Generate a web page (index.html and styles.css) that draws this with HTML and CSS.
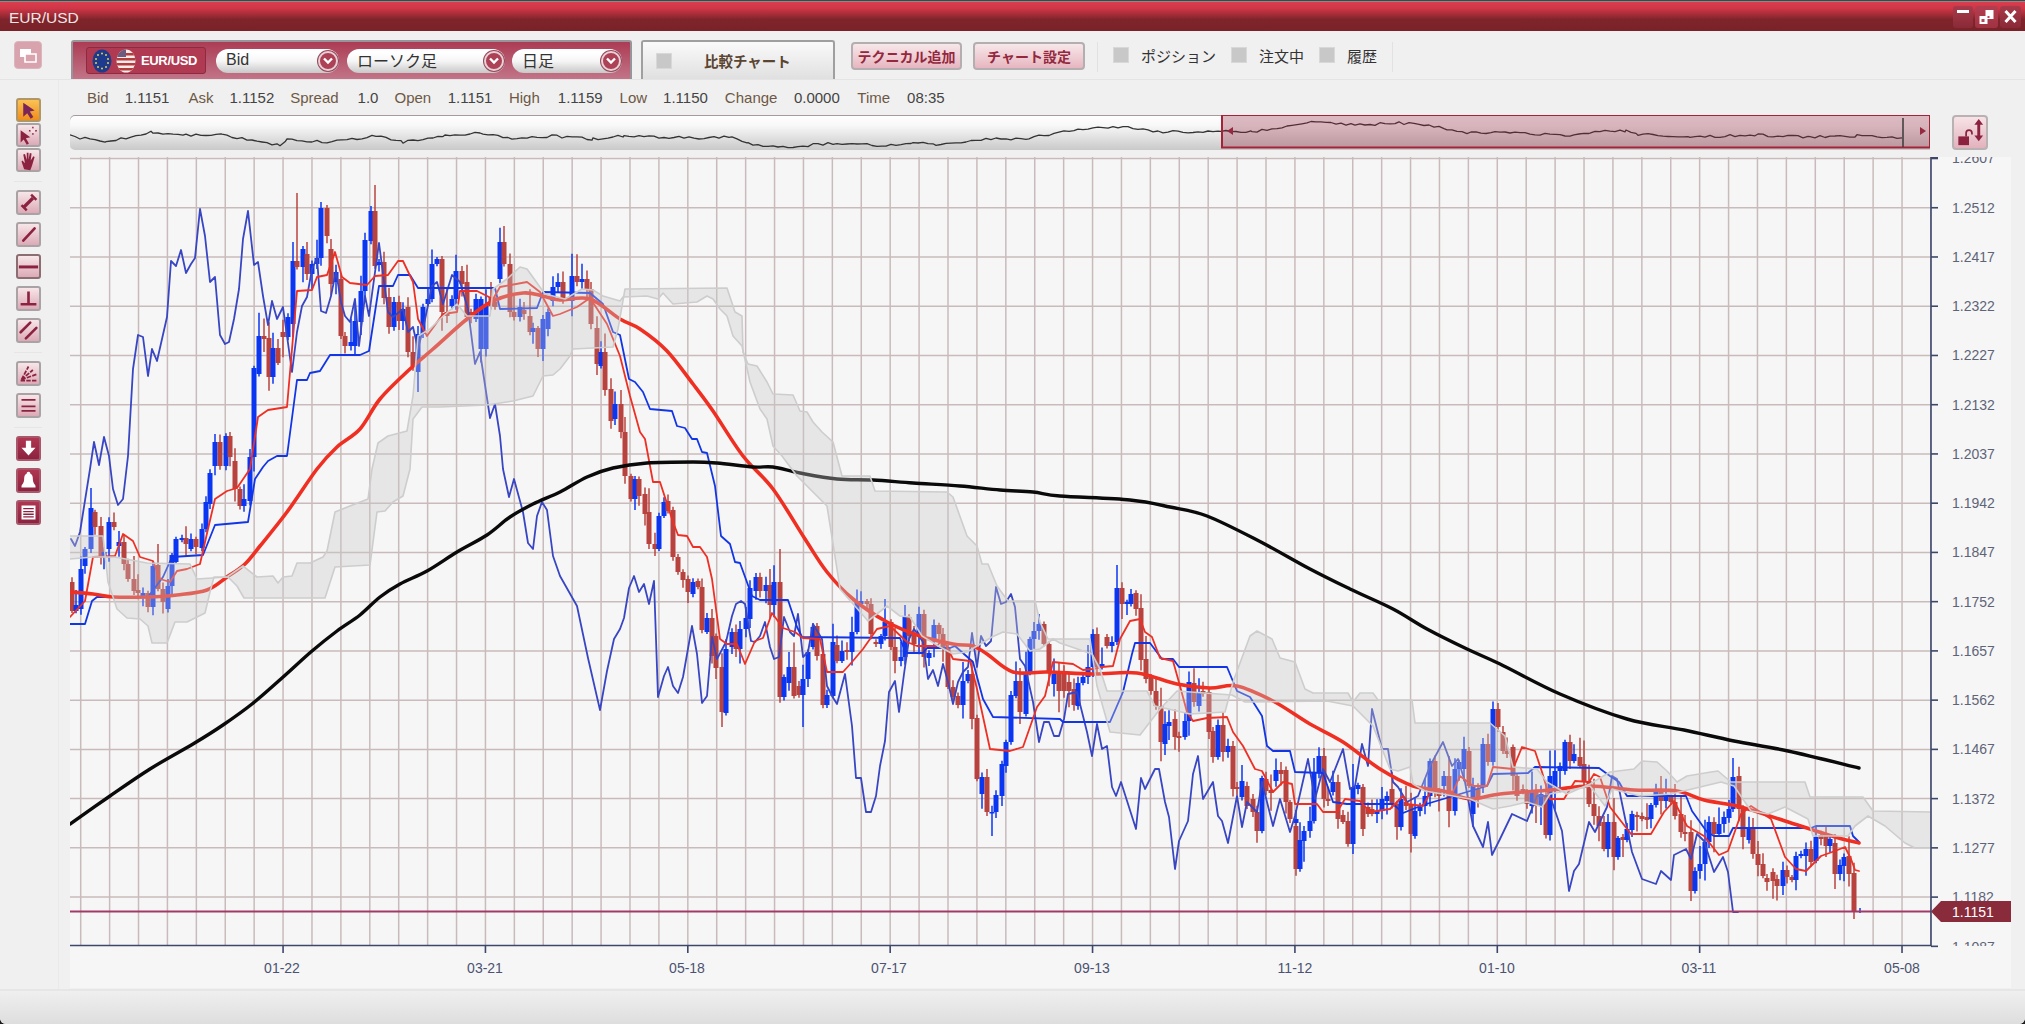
FILE: index.html
```html
<!DOCTYPE html>
<html lang="ja">
<head>
<meta charset="utf-8">
<title>EUR/USD</title>
<link rel="stylesheet" href="styles.css">
</head>
<body>
<div class="window">
  <header class="titlebar">
    <span class="title">EUR/USD</span>
    <div class="winbtns">
      <span class="winbtn"><svg viewBox="0 0 20 22" width="20" height="22"><rect x="4" y="4" width="12" height="3" fill="#fff"/></svg></span>
      <span class="winbtn winbtn-on"><svg viewBox="0 0 22 22" width="23" height="22"><path d="M10 4h8v9h-8zM4 10h8v8H4z" fill="#fff"/><path d="M12 10h2v2h-2zM6 13h3v3H6z" fill="#b8465a"/></svg></span>
      <span class="winbtn"><svg viewBox="0 0 20 22" width="21" height="22"><path d="M5 5l10 11M15 5L5 16" stroke="#fff" stroke-width="3"/></svg></span>
    </div>
  </header>

  <section class="toolbar">
    <span class="toggle"><svg viewBox="0 0 28 28" width="28" height="28"><path d="M6 8h11v8H6z" fill="#fff"/><path d="M11 13h11v8H11z" fill="#d9a3ae" stroke="#fff" stroke-width="1.6"/></svg></span>
    <div class="panel">
      <div class="pair">
        <svg class="flag" viewBox="0 0 20 24" width="20" height="24"><ellipse cx="10" cy="12" rx="9.5" ry="11.5" fill="#1d3a8f"/><g fill="#e8d040"><circle cx="10" cy="4.5" r="1"/><circle cx="14" cy="6" r="1"/><circle cx="16" cy="10" r="1"/><circle cx="16" cy="14" r="1"/><circle cx="14" cy="18" r="1"/><circle cx="10" cy="19.5" r="1"/><circle cx="6" cy="18" r="1"/><circle cx="4" cy="14" r="1"/><circle cx="4" cy="10" r="1"/><circle cx="6" cy="6" r="1"/></g></svg>
        <svg class="flag" viewBox="0 0 20 24" width="20" height="24"><defs><clipPath id="usclip"><ellipse cx="10" cy="12" rx="9.5" ry="11.5"/></clipPath></defs><g clip-path="url(#usclip)"><rect width="20" height="24" fill="#f4ecea"/><path d="M0 4h20v2.4H0zM0 9h20v2.4H0zM0 14h20v2.4H0zM0 19h20v2.4H0z" fill="#b53c3c"/><rect width="10" height="8" fill="#6d5a7c"/></g></svg>
        <span class="pair-name">EUR/USD</span>
      </div>
      <div class="select select-bid"><span>Bid</span><i class="chev"><svg viewBox="0 0 12 10" width="12" height="10"><path d="M2 2.5l4 4 4-4" fill="none" stroke="#fff" stroke-width="2.4"/></svg></i></div>
      <div class="select select-type"><span>ローソク足</span><i class="chev"><svg viewBox="0 0 12 10" width="12" height="10"><path d="M2 2.5l4 4 4-4" fill="none" stroke="#fff" stroke-width="2.4"/></svg></i></div>
      <div class="select select-span"><span>日足</span><i class="chev"><svg viewBox="0 0 12 10" width="12" height="10"><path d="M2 2.5l4 4 4-4" fill="none" stroke="#fff" stroke-width="2.4"/></svg></i></div>
    </div>
    <div class="compare"><i class="check"></i><span>比較チャート</span></div>
    <button class="pink-btn pink-btn-a">テクニカル追加</button>
    <button class="pink-btn pink-btn-b">チャート設定</button>
    <div class="checks">
      <i class="check"></i><span class="check-label">ポジション</span>
      <i class="check"></i><span class="check-label">注文中</span>
      <i class="check"></i><span class="check-label">履歴</span>
    </div>
  </section>

  <div class="workspace">
    <aside class="sidebar">
      <div class="tools tools-tight">
        <span class="tool tool-active"><svg viewBox="0 0 24 24"><path d="M6 3l13 9-5.5 1 4 6.5-3 2-4-6.5L6 19z" fill="#7a2458"/></svg></span>
        <span class="tool"><svg viewBox="0 0 24 24"><path d="M3 6l11 8-5 1 3.500 6-2.500 1.600-3.500-6L3 20z" fill="#8b2340"/><path d="M17 2v9M12.500 6.500h9" stroke="#8b2340" stroke-width="1.600"/><circle cx="17" cy="6.500" r="2.800" fill="#f3dfe3"/></svg></span>
        <span class="tool"><svg viewBox="0 0 24 24"><path d="M7 22l-3-9 1-1 3 3-2-10 2-.5 2 7V3h2v8l1.500-7.500 2 .5-1 8 3-5 1.500 1-3 10-2 5z" fill="#8b2340"/></svg></span>
      </div>
      <hr class="tool-sep">
      <div class="tools">
        <span class="tool"><svg viewBox="0 0 24 24"><path d="M7 17L17 7" stroke="#8b2340" stroke-width="4"/><path d="M3 16l6 6 2-2-6-6zM14 4l6 6 2-2-6-6z" fill="#8b2340"/></svg></span>
        <span class="tool"><svg viewBox="0 0 24 24"><path d="M6 19L19 5" stroke="#8b2340" stroke-width="3" stroke-linecap="round"/></svg></span>
        <span class="tool tool-dark-edge"><svg viewBox="0 0 24 24"><path d="M1 12.500h22" stroke="#8b2340" stroke-width="3.400"/></svg></span>
        <span class="tool"><svg viewBox="0 0 24 24"><path d="M12 4v14M3 18.500h18" stroke="#8b2340" stroke-width="3"/></svg></span>
        <span class="tool"><svg viewBox="0 0 24 24"><path d="M3 14L14 3M9 21L21 9" stroke="#8b2340" stroke-width="3" stroke-linecap="round"/></svg></span>
      </div>
      <hr class="tool-sep">
      <div class="tools">
        <span class="tool"><svg viewBox="0 0 24 24"><path d="M4 19L12 4M4 19L17 8M4 19L21 13M3 20h18" stroke="#8b2340" stroke-width="2" stroke-dasharray="5 1.500" fill="none"/></svg></span>
        <span class="tool"><svg viewBox="0 0 24 24"><path d="M4 5.500h16M4 13h16M4 18h16" stroke="#8b2340" stroke-width="2"/></svg></span>
      </div>
      <hr class="tool-sep">
      <div class="tools">
        <span class="tool tool-solid"><svg viewBox="0 0 24 24"><path d="M9 3h6v8h5l-8 9-8-9h5z" fill="#fff"/></svg></span>
        <span class="tool tool-solid"><svg viewBox="0 0 24 24"><path d="M12 2c1.500 0 2 1 2 2 2.500 1 3 3.500 3 7 0 3 2 5 3 7v2H4v-2c1-2 3-4 3-7 0-3.500.5-6 3-7 0-1 .5-2 2-2z" fill="#fff"/></svg></span>
        <span class="tool tool-solid"><svg viewBox="0 0 24 24"><path d="M4 4h16v16H4z" fill="#fff"/><path d="M6 7.500h12M6 11h12M6 14h12M6 17h12" stroke="#8b2340" stroke-width="1.500"/></svg></span>
      </div>
    </aside>

    <main class="content">
      <div class="info">
        <span class="k k-bid">Bid</span><span class="v v-bid">1.1151</span>
        <span class="k k-ask">Ask</span><span class="v v-ask">1.1152</span>
        <span class="k k-spread">Spread</span><span class="v v-spread">1.0</span>
        <span class="k k-open">Open</span><span class="v v-open">1.1151</span>
        <span class="k k-high">High</span><span class="v v-high">1.1159</span>
        <span class="k k-low">Low</span><span class="v v-low">1.1150</span>
        <span class="k k-change">Change</span><span class="v v-change">0.0000</span>
        <span class="k k-time">Time</span><span class="v v-time">08:35</span>
      </div>

      <div class="navrow">
        <div class="navigator">
          <svg id="navsvg" class="navsvg" viewBox="71 115 1860 35" width="1860" height="35"></svg>
        </div>
        <span class="lock"><svg viewBox="0 0 36 36" width="36" height="35"><path d="M27 4l-4.500 6h3v11h-3L27 27l4.500-6h-3V10h3z" fill="#8b2340"/><path d="M6 22h11v9H6z" fill="#8b2340"/><path d="M14 22v-3.500a3 3 0 0 1 6 0V20" fill="none" stroke="#8b2340" stroke-width="1.800"/></svg></span>
      </div>

      <div class="chart">
        <svg id="chartsvg" class="chartsvg" viewBox="70 158 1941 831" width="1941" height="831">
          <defs>
            <clipPath id="plotclip"><rect x="70" y="158" width="1861" height="789"/></clipPath>
            <clipPath id="axisclip"><rect x="1931" y="158" width="80" height="789"/></clipPath>
          </defs>
          <g id="plot" clip-path="url(#plotclip)"></g>
          <g id="axes"></g>
          <g class="price-labels" clip-path="url(#axisclip)">
            <text x="1952" y="164">1.2607</text>
            <text x="1952" y="214">1.2512</text>
            <text x="1952" y="263">1.2417</text>
            <text x="1952" y="312">1.2322</text>
            <text x="1952" y="361">1.2227</text>
            <text x="1952" y="411">1.2132</text>
            <text x="1952" y="460">1.2037</text>
            <text x="1952" y="509">1.1942</text>
            <text x="1952" y="558">1.1847</text>
            <text x="1952" y="608">1.1752</text>
            <text x="1952" y="657">1.1657</text>
            <text x="1952" y="706">1.1562</text>
            <text x="1952" y="755">1.1467</text>
            <text x="1952" y="805">1.1372</text>
            <text x="1952" y="854">1.1277</text>
            <text x="1952" y="903">1.1182</text>
            <text x="1952" y="953">1.1087</text>
          </g>
          <polygon class="price-tag" points="1931,912.500 1941,902 2011,902 2011,923 1941,923"/>
          <text class="price-tag-text" x="1952" y="918">1.1151</text>
          <g class="date-labels">
            <text x="282" y="974">01-22</text>
            <text x="485" y="974">03-21</text>
            <text x="687" y="974">05-18</text>
            <text x="889" y="974">07-17</text>
            <text x="1092" y="974">09-13</text>
            <text x="1295" y="974">11-12</text>
            <text x="1497" y="974">01-10</text>
            <text x="1699" y="974">03-11</text>
            <text x="1902" y="974">05-08</text>
          </g>
        </svg>
      </div>
    </main>
  </div>
  <footer class="footer"></footer>
</div>
<script src="chart.js"></script>
</body>
</html>
```

FILE: styles.css
```css
* { box-sizing: border-box; }
html, body { margin: 0; height: 100%; background: #1c1c1c; overflow: hidden; }
body { font-family: "Liberation Sans", "Noto Sans CJK JP", sans-serif; }

.window {
  width: 2025px; height: 1024px;
  display: flex; flex-direction: column;
  background: #f0f0f0;
  border-radius: 0 0 6px 6px;
  overflow: hidden;
}

.titlebar {
  height: 31px; flex: none;
  display: flex; align-items: center;
  padding: 3px 4px 0 9px;
  border-top: 1px solid #444;
  background: linear-gradient(#dc3e50 0, #cf3646 25%, #7f242b 62%, #7a2229 100%);
  box-shadow: inset 0 1px 0 #8a8a8a;
}
.title { color: #f2e6e6; font-size: 15.5px; }
.winbtns { margin-left: auto; display: flex; gap: 2px; align-self: flex-start; margin-top: 2px; }
.winbtn {
  display: flex; height: 22px; border-radius: 3px;
  background: linear-gradient(#a83a4a, #8a2a36);
}
.winbtn-on { background: linear-gradient(#b33e50, #a03242); }

.toolbar {
  height: 49px; flex: none;
  display: flex; align-items: flex-start;
  border-bottom: 1px solid #e4e4e4;
  padding: 9px 0 0 14px;
}
.toggle {
  width: 28px; height: 28px; margin-top: 1px; display: block;
  background: #d9a3ae; border-radius: 4px; border: 1px solid #dcb6be;
}
.toggle svg { display: block; margin: -1px; }

.panel {
  width: 561px; height: 39px; margin-left: 29px; flex: none;
  display: flex; align-items: flex-start;
  padding: 5px 0 0 13px;
  background: linear-gradient(#ab3c54, #c27488);
  border: 2px solid #99939a; border-bottom: 0;
  border-radius: 3px 3px 0 0;
}
.pair {
  width: 120px; height: 27px; flex: none;
  display: flex; align-items: center; gap: 4px;
  padding-left: 5px; border-radius: 3px;
  background: #b03a52; border: 1px solid #8b2a40;
}
.flag { flex: none; }
.pair-name { color: #fff; font-size: 13px; font-weight: 700; letter-spacing: -0.35px; margin-left: 1px; }

.select {
  height: 24px; flex: none; margin-top: 2px;
  display: flex; align-items: center; justify-content: space-between;
  padding: 0 1px 2px 10px; font-size: 16px; color: #333;
  border-radius: 12px;
  background: linear-gradient(#fff 15%, #f6f6f6 50%, #c8c8c8 100%);
}
.select-bid { width: 123px; margin-left: 10px; }
.select-type { width: 158px; margin-left: 8px; }
.select-span { width: 110px; margin-left: 7px; padding-left: 10px; }
.chev {
  width: 20px; height: 20px; border-radius: 50%; margin-top: 2px;
  display: flex; align-items: center; justify-content: center;
  background: #ad4257; border: 2px solid #e8d0d6;
  box-shadow: 0 0 0 1px #96485a;
}

.compare {
  width: 194px; height: 39px; margin-left: 9px; flex: none;
  display: flex; align-items: center;
  padding-left: 13px;
  border: 2px solid #9f9f9f; border-bottom: 0;
  border-radius: 3px 3px 0 0;
  background: linear-gradient(#fafafa, #e0e0e0);
}
.compare span { font-size: 14.5px; font-weight: 700; color: #5a4432; margin-left: 32px; }
.check {
  width: 16px; height: 16px; flex: none; display: block;
  background: #c8c8c8; border: 1px solid #d8d8d8;
}

.pink-btn {
  height: 28px; flex: none; padding: 0; margin-top: 2px;
  font: 700 14px "Liberation Sans", "Noto Sans CJK JP", sans-serif;
  color: #93283f; border: 2px solid #b5aeb0; border-radius: 4px;
  background: linear-gradient(#f7e8ea, #e7b6c0);
}
.pink-btn-a { width: 111px; margin-left: 16px; }
.pink-btn-b { width: 112px; margin-left: 11px; }

.checks {
  display: flex; align-items: center; height: 30px; flex: none;
  margin: 2px 0 0 12px; padding: 0 17px 4px 15px;
  width: 296px;
  border-left: 1px solid #e2e2e2; border-right: 1px solid #e2e2e2;
}
.check-label { font-size: 15px; color: #333; margin: 0 15px 0 12px; white-space: nowrap; }

.workspace { flex: 1; display: flex; min-height: 0; }
.sidebar {
  width: 59px; flex: none; margin-right: 11px;
  display: flex; flex-direction: column;
  padding: 18px 0 0 16px;
  border-right: 1px solid #e9e9e9;
}
.tools { display: flex; flex-direction: column; gap: 7px; }
.tools-tight { gap: 1px; }
.tool {
  display: block; width: 25px; height: 25px;
  border: 2px solid #aaa3a5; border-radius: 3px;
  background: linear-gradient(#f7e6e9, #dcaab6);
}
.tool svg { display: block; width: 21px; height: 21px; }
.tools-tight .tool { height: 24px; }
.tool-active { background: linear-gradient(#fbc255, #ef8d1c); border-color: #b19666; }
.tool-dark-edge { border-color: #8a6e72; }
.tool-solid { background: linear-gradient(#b03650, #8b2340); border-color: #a8566a; }
.tool-sep { width: 28px; margin: 9px 0 8px -2px; border: 0; border-top: 1px solid #e6e6e6; height: 0; }

.content { flex: 1; min-width: 0; display: flex; flex-direction: column; }
.info {
  height: 34px; flex: none;
  display: flex; align-items: center;
  font-size: 15px; color: #444;
}
.k { color: #6e5845; }
.k-bid { margin-left: 17px; }
.v-bid { margin-left: 16px; }
.k-ask { margin-left: 19px; }
.v-ask { margin-left: 16px; }
.k-spread { margin-left: 16px; }
.v-spread { margin-left: 19px; }
.k-open { margin-left: 16px; }
.v-open { margin-left: 16.5px; }
.k-high { margin-left: 16.5px; }
.v-high { margin-left: 18px; }
.k-low { margin-left: 17px; }
.v-low { margin-left: 16px; }
.k-change { margin-left: 17px; }
.v-change { margin-left: 16.5px; }
.k-time { margin-left: 17.5px; }
.v-time { margin-left: 17px; }

.navrow { height: 43px; flex: none; display: flex; align-items: flex-start; padding-top: 1px; }
.navigator {
  width: 1860px; height: 35px; flex: none; overflow: hidden;
  border-radius: 5px 0 0 5px;
  background: linear-gradient(#fff 0, #f8f8f8 30%, #c9c9c9 100%);
  box-shadow: inset 0 1px 0 #a89a9a;
}
.navsvg { display: block; }
.lock {
  width: 36px; height: 35px; margin-left: 22px; flex: none; display: block;
  border: 2px solid #b8b2b3; border-radius: 4px;
  background: linear-gradient(#f7e3e7, #e2b2bd);
}
.lock svg { display: block; margin: -2px; }

.chart { height: 831px; flex: none; }
.chartsvg { display: block; }
.chart-bg { fill: #f6f6f6; }
.grid-line { stroke: #c9bbbb; stroke-width: 1.5; }
.axis-line { stroke: #3c476b; stroke-width: 1.6; fill: none; }
.price-labels text { font: 14px "Liberation Sans", sans-serif; fill: #5e6478; }
.date-labels text { font: 14px "Liberation Sans", sans-serif; fill: #4b5272; text-anchor: middle; }
.price-tag { fill: #8a2b3c; }
.price-tag-text { font: 14px "Liberation Sans", sans-serif; fill: #fff; }
.price-line { stroke: #a23a68; stroke-width: 2; }

.series { fill: none; stroke-linejoin: round; stroke-linecap: round; }
.s-black { stroke: #0a0a0a; stroke-width: 3.4; }
.s-thick { stroke: #ef2f22; stroke-width: 3.6; }
.s-tenkan { stroke: #ee3024; stroke-width: 1.8; }
.s-kijun { stroke: #1236e6; stroke-width: 1.8; }
.s-chikou { stroke: #3846c4; stroke-width: 1.8; }
.cloud-fill { fill: #c8c8c8; fill-opacity: 0.35; stroke: none; }
.cloud-line { fill: none; stroke: #cdcdcd; stroke-width: 1.6; stroke-linejoin: round; }

.body-up { fill: #0a36f2; }
.body-dn { fill: #b8433e; }
.wick-up { stroke: #0a36f2; stroke-width: 1.5; }
.wick-dn { stroke: #b8433e; stroke-width: 1.5; }

.nav-line { fill: none; stroke: #333; stroke-width: 1.3; stroke-linejoin: round; }
.nav-sel { fill: #96283f; fill-opacity: 0.32; stroke: #a32338; stroke-width: 2; }
.nav-mark { fill: #96283f; }
.nav-tick { stroke: #3a3a3a; stroke-width: 1.5; }

.footer {
  height: 35px; flex: none;
  border-top: 2px solid #e6e6e6;
  background: linear-gradient(#efefef, #dedede);
}
```

FILE: chart.js
```js
(function () {
  var NS = 'http://www.w3.org/2000/svg';
  function el(parent, name, attrs) {
    var n = document.createElementNS(NS, name);
    for (var k in attrs) n.setAttribute(k, attrs[k]);
    parent.appendChild(n);
    return n;
  }
  var seed = 20250;
  function rnd() { seed = (seed * 16807) % 2147483647; return seed / 2147483647; }

  // Catmull-Rom through the points, for the moving averages
  function smooth(str) {
    var p = str.split(' ').map(function (s) { return s.split(',').map(Number); });
    var d = 'M' + p[0][0] + ' ' + p[0][1];
    for (var i = 0; i < p.length - 1; i++) {
      var a = p[i - 1] || p[i], b = p[i], c = p[i + 1], e = p[i + 2] || c;
      d += 'C' + (b[0] + (c[0] - a[0]) / 6).toFixed(1) + ' ' + (b[1] + (c[1] - a[1]) / 6).toFixed(1) + ' ' +
        (c[0] - (e[0] - b[0]) / 6).toFixed(1) + ' ' + (c[1] - (e[1] - b[1]) / 6).toFixed(1) + ' ' + c[0] + ' ' + c[1];
    }
    return d;
  }

  var plot = document.getElementById('plot');
  var axes = document.getElementById('axes');
  var nav = document.getElementById('navsvg');

  // --- background and grid
  var chartSvg = document.getElementById('chartsvg');
  var bg = el(chartSvg, 'rect', { x: 70, y: 158, width: 1941, height: 831, 'class': 'chart-bg' });
  chartSvg.insertBefore(bg, plot);

  var i, y, x;
  for (i = 0; i <= 16; i++) {
    y = 159.5 + 49.24 * i;
    el(plot, 'line', { x1: 70, x2: 1931, y1: y, y2: y, 'class': 'grid-line' });
    el(axes, 'line', { x1: 1931, x2: 1938, y1: y, y2: y, 'class': 'axis-line' });
  }
  for (i = 0; i <= 64; i++) {
    x = 80.7 + 28.91 * i;
    el(plot, 'line', { x1: x, x2: x, y1: 158, y2: 947, 'class': 'grid-line' });
  }
  for (i = 7; i <= 63; i += 7) {
    x = 80.7 + 28.91 * i;
    el(axes, 'line', { x1: x, x2: x, y1: 947, y2: 954, 'class': 'axis-line' });
  }
  el(axes, 'path', { d: 'M1938 158.500H1931V946.500H70', 'class': 'axis-line' });

  // --- candles: colour+x,top,bottom (page pixels)
  var candles = 'r72,583,612 b76,606,612 b81,570,610 b85,550,567 b91,509,550 r95,513,528 r101,527,558 b104,553,557 b109,523,550 r114,523,528 b119,543,547 r124,543,565 r128,565,580 r134,580,592 r138,591,594 b143,594,597 r148,594,608 b153,567,608 r158,566,590 r163,590,603 b168,587,610 b172,556,587 b176,540,563 b182,539,541 r186,539,545 b191,540,550 r196,540,548 b202,530,549 b206,503,530 b210,474,505 b215,443,467 r220,443,467 b226,437,467 r230,437,458 r235,462,490 r240,490,507 b244,500,507 b250,458,502 b254,369,458 b259,337,375 r264,337,340 r269,339,378 b273,349,378 r278,349,364 r283,333,338 b288,318,338 b293,262,325 r297,262,268 b303,250,268 r307,255,275 b312,265,275 b317,259,265 b321,209,259 r327,209,237 r331,250,285 b336,273,283 r341,280,337 r345,337,347 b351,343,347 b355,322,347 b361,292,323 b365,241,292 b371,212,242 r375,212,267 b379,263,266 r384,263,299 r389,298,328 b394,303,328 r399,303,322 b403,310,322 r408,308,353 r413,353,367 b418,335,373 b423,308,335 b428,300,305 b432,265,300 b437,260,265 r442,260,313 r447,313,317 b452,300,307 b456,272,300 r462,272,285 r467,283,318 r471,313,318 b476,300,320 b481,300,350 b486,307,350 r491,298,307 r495,303,308 b500,243,280 r504,243,265 r510,265,313 r514,313,318 b520,308,318 r524,311,315 r530,317,333 b533,329,333 r538,329,350 b543,320,350 b548,313,330 b553,288,302 b558,283,288 r563,283,302 b572,277,302 r577,277,283 b582,280,283 r587,280,290 r591,290,325 r597,329,365 b601,353,367 r605,353,391 r611,390,422 b615,405,420 r621,405,433 r625,433,477 r631,477,500 b635,480,500 r639,480,497 r645,495,515 r649,513,545 r655,545,550 b659,517,550 b664,503,517 r668,502,512 r673,511,558 r678,558,573 r683,573,581 r688,580,593 b693,583,595 r698,582,588 r702,588,631 b707,619,633 r712,619,657 r716,637,669 r722,668,713 b726,650,714 b732,633,648 r736,633,650 b740,630,650 b746,619,630 b750,589,620 b756,578,592 r760,578,592 b766,586,592 r770,586,606 b774,583,606 r780,583,698 b784,678,698 b789,668,684 r794,668,697 r799,687,696 b803,680,696 b808,653,680 b813,628,648 r817,627,657 r823,655,706 b827,696,706 b833,643,697 r837,646,662 b842,652,662 r847,651,653 b852,633,653 b857,603,633 b861,602,605 r867,602,605 r871,605,635 r876,643,645 b881,637,645 b885,623,637 r891,623,648 r895,648,662 b901,658,662 b905,617,658 r909,618,637 r914,636,645 b919,615,635 r924,615,658 b929,654,659 b934,626,643 r939,626,635 r943,635,648 r948,648,688 r953,688,698 r958,697,706 b963,682,706 b968,675,682 r972,675,720 r977,719,780 b982,778,795 r987,778,813 b992,813,814 b996,796,813 b1002,765,797 b1006,743,767 b1011,696,743 b1016,682,697 r1020,682,713 b1026,673,715 b1030,640,673 b1034,632,640 b1039,625,632 r1044,625,645 r1049,645,673 b1054,675,685 r1059,673,692 r1064,672,692 r1069,683,692 r1074,690,706 b1078,684,707 b1083,678,684 b1088,668,678 b1093,635,668 r1097,635,668 b1102,665,668 r1107,638,647 b1112,643,647 b1117,589,643 r1122,589,605 b1127,603,605 b1131,595,605 r1136,594,610 r1141,609,661 r1146,660,680 r1151,677,692 r1156,692,707 r1161,707,743 b1165,725,745 b1169,723,727 r1175,720,738 r1179,737,739 b1185,722,738 b1189,683,722 r1194,684,703 b1199,693,707 r1203,692,695 r1209,693,733 r1213,732,758 b1218,726,758 r1223,726,753 b1228,747,753 r1233,747,790 r1237,788,790 b1242,782,798 r1247,787,807 r1253,800,813 r1257,813,832 b1262,779,832 r1266,780,792 r1271,791,794 b1276,771,782 r1281,771,775 r1286,771,803 r1290,803,820 b1296,820,824 r1296,827,870 b1300,841,870 b1304,832,842 b1310,822,832 b1314,774,822 b1319,757,774 r1324,757,800 r1328,800,802 b1333,783,793 r1338,783,820 r1343,816,823 r1348,822,845 b1353,788,845 b1358,786,790 r1363,788,830 r1368,808,815 r1372,810,815 b1377,812,815 b1382,800,812 b1387,797,802 r1392,790,805 r1397,805,828 b1401,800,828 r1406,803,807 r1411,806,835 b1415,812,837 b1420,808,812 b1425,797,807 b1430,762,797 r1435,762,793 r1439,792,797 b1444,777,787 r1449,777,812 b1455,770,812 b1459,763,770 b1464,750,770 r1469,752,787 b1473,787,815 r1478,790,800 b1483,745,787 r1488,745,763 b1493,710,763 r1498,710,728 r1503,733,752 r1507,752,755 r1513,748,777 r1517,777,797 r1523,790,793 r1527,792,805 b1532,792,807 r1536,793,807 b1541,795,807 r1546,797,836 b1550,777,836 b1555,772,788 b1560,767,772 b1565,743,772 r1570,743,762 b1574,755,762 r1580,758,767 r1584,765,783 r1589,782,805 r1594,805,817 r1599,817,827 r1604,823,850 b1608,823,850 r1614,823,858 b1618,839,858 r1623,838,841 b1627,830,841 b1632,815,831 r1637,816,818 r1642,817,820 r1647,818,821 b1651,806,820 b1656,792,806 r1661,792,802 b1666,798,802 r1671,798,803 r1675,803,817 r1681,815,833 r1685,833,835 r1691,833,892 b1695,872,892 b1700,865,872 b1705,843,865 b1709,823,843 r1714,823,835 b1719,825,835 b1724,818,825 b1729,810,819 b1733,778,810 r1739,777,810 r1743,810,838 b1749,830,841 r1753,830,855 r1758,855,866 r1763,865,877 r1767,879,883 r1773,873,882 r1777,880,887 b1783,871,887 r1787,871,878 r1792,878,881 b1796,857,881 b1801,855,857 b1806,850,857 r1811,850,863 b1816,838,862 r1821,836,840 r1826,835,847 b1830,840,847 r1835,844,875 b1840,866,875 b1844,858,867 r1849,857,875 r1854,874,913';
  var extremes = {
    297: [194, 0], 321: [203, 0], 375: [186, 0], 504: [227, 0], 418: [0, 393], 543: [0, 362],
    780: [550, 0], 803: [0, 728], 992: [0, 837], 722: [0, 728], 1353: [0, 855], 1733: [759, 0],
    1691: [0, 902], 1854: [0, 920]
  };
  var wicks = el(plot, 'g', {});
  var bodies = el(plot, 'g', {});
  candles.split(' ').forEach(function (c) {
    var up = c.charAt(0) === 'b';
    var p = c.slice(1).split(',').map(Number);
    var cx = p[0], t = p[1], b = p[2];
    var ex = extremes[cx] || [0, 0];
    var hi = ex[0] || t - 2 - rnd() * rnd() * 26;
    var lo = ex[1] || b + 2 + rnd() * rnd() * 22;
    el(wicks, 'line', { x1: cx, x2: cx, y1: hi, y2: lo, 'class': up ? 'wick-up' : 'wick-dn' });
    el(bodies, 'rect', { x: cx - 2.5, y: t, width: 5, height: Math.max(b - t, 1.5), 'class': up ? 'body-up' : 'body-dn' });
  });
  el(plot, 'line', { x1: 1860, x2: 1860, y1: 909, y2: 914, 'class': 'wick-up' });

  // --- indicator lines
  var lines = {
    's-chikou': '71,540 75,547 80,533 90,470 94,443 99,466 104,438 109,457 113,490 118,506 123,500 128,457 133,370 138,336 143,338 148,377 152,350 157,362 167,318 171,262 176,267 181,251 186,274 191,265 195,259 200,210 205,237 210,283 215,278 220,336 225,345 229,343 234,320 239,290 243,240 248,212 254,266 258,263 263,297 268,326 272,302 277,320 283,308 287,337 292,373 297,333 302,307 307,298 312,270 317,259 321,312 326,314 331,297 336,272 341,303 345,317 350,323 355,300 359,347 365,297 369,317 379,244 388,313 393,318 403,310 408,333 413,328 418,350 423,330 432,287 437,283 443,305 452,276 460,283 468,310 475,365 480,353 490,419 495,405 500,437 503,470 509,498 514,480 523,513 528,544 533,550 537,517 542,503 547,511 553,557 560,577 577,607 588,659 600,711 607,672 614,640 620,630 624,619 629,589 634,577 639,593 644,585 649,605 654,582 658,698 664,677 668,668 673,687 678,694 683,678 692,627 697,655 702,704 707,697 712,638 717,660 726,643 732,617 736,605 741,602 745,605 751,642 755,643 760,637 765,623 770,648 774,660 779,658 784,618 790,633 794,637 798,615 803,658 808,653 813,625 822,640 827,687 832,697 837,705 845,675 852,727 856,779 861,779 866,813 871,813 876,797 880,767 885,742 889,693 895,682 899,713 904,675 909,640 914,630 923,643 928,680 933,671 938,687 943,665 948,683 953,705 958,683 963,673 968,668 972,634 977,668 981,637 986,647 991,642 996,588 1001,605 1006,603 1011,595 1015,608 1020,660 1025,667 1033,703 1039,743 1044,723 1049,723 1054,737 1059,737 1064,720 1068,695 1077,693 1087,733 1092,757 1097,725 1102,750 1107,747 1112,788 1116,797 1121,783 1136,830 1141,779 1145,790 1155,770 1159,770 1165,803 1169,818 1175,870 1179,842 1188,822 1193,775 1198,757 1203,800 1213,783 1218,817 1222,822 1228,844 1237,797 1242,828 1247,803 1257,813 1262,783 1273,827 1280,800 1290,833 1295,817 1308,760 1315,800 1323,770 1330,783 1343,750 1350,790 1355,787 1362,745 1368,767 1372,710 1382,750 1388,750 1393,783 1398,788 1407,803 1418,797 1430,767 1443,743 1452,767 1458,760 1465,783 1473,827 1483,848 1488,823 1492,856 1500,840 1512,815 1527,822 1537,797 1550,797 1562,832 1569,892 1574,872 1579,865 1589,823 1595,833 1607,808 1612,777 1617,780 1632,853 1642,880 1656,885 1661,872 1671,881 1674,856 1686,850 1691,860 1697,835 1704,842 1714,873 1723,858 1728,873 1733,913 1738,913',
    's-kijun': '70,625 85,625 92,602 97,598 148,598 163,578 172,558 203,556 215,526 248,523 255,480 263,468 268,462 277,457 287,457 297,381 307,381 310,374 320,372 330,356 360,356 369,352 379,287 393,287 398,276 410,276 418,289 495,289 500,310 537,309 543,293 590,294 603,305 613,333 620,336 629,380 635,383 643,393 650,410 672,412 677,427 685,429 692,440 697,440 702,453 707,454 715,487 721,537 730,545 735,563 740,564 752,597 760,601 788,601 797,628 802,638 900,639 903,647 907,654 923,654 927,649 950,649 955,647 973,663 983,700 993,718 1060,720 1063,723 1110,723 1123,693 1132,655 1135,644 1150,644 1162,660 1173,660 1179,668 1227,668 1237,692 1250,698 1262,717 1267,747 1273,752 1290,752 1295,773 1323,774 1333,803 1347,805 1393,805 1403,814 1423,806 1487,787 1493,775 1528,774 1535,768 1599,769 1610,777 1619,783 1627,797 1686,797 1692,812 1707,833 1714,837 1729,837 1733,829 1811,829 1816,827 1850,827 1853,837 1859,843',
    's-tenkan': '70,618 85,602 93,558 115,557 123,535 133,542 140,558 153,562 160,580 170,583 177,572 187,570 200,565 208,530 215,500 227,492 237,489 250,470 258,418 268,411 287,408 297,292 312,291 317,278 327,276 335,253 342,278 350,284 367,286 375,277 388,276 398,262 403,262 413,283 418,320 427,337 443,315 457,313 460,292 477,292 493,300 500,288 527,283 540,293 553,317 560,315 577,308 590,299 607,325 620,357 630,397 640,433 645,440 653,483 660,483 673,523 678,536 687,537 693,548 700,548 707,558 712,580 720,640 727,645 737,645 745,665 755,642 763,639 772,614 783,629 795,633 803,639 820,640 827,673 843,673 852,663 863,650 877,630 890,627 907,643 917,647 937,647 943,640 953,660 970,662 977,690 990,750 1010,752 1023,748 1037,708 1045,697 1053,663 1073,665 1083,671 1093,670 1102,668 1113,667 1120,640 1130,622 1140,620 1145,633 1152,638 1160,659 1173,662 1180,687 1187,713 1193,722 1207,719 1227,718 1233,733 1243,747 1255,770 1262,772 1273,793 1283,783 1292,785 1295,805 1317,805 1323,813 1337,813 1345,800 1360,802 1370,813 1390,810 1403,797 1407,805 1423,807 1432,790 1453,793 1460,777 1473,787 1487,787 1493,768 1513,770 1522,748 1535,752 1542,773 1550,800 1564,800 1575,782 1589,783 1594,775 1600,778 1610,808 1631,835 1651,835 1664,813 1674,802 1687,827 1704,837 1719,856 1728,852 1741,815 1751,807 1771,820 1785,858 1796,870 1806,872 1821,857 1835,852 1845,848 1851,860 1855,871 1859,872',
    's-thick': '70,593 93,595 113,598 148,598 177,596 207,591 227,578 245,565 260,547 287,513 317,470 337,448 360,430 380,400 410,370 433,350 467,320 493,302 523,294 543,297 560,301 590,300 620,320 640,330 667,352 693,385 713,412 743,457 773,490 805,540 827,573 853,600 887,623 920,637 953,645 973,647 987,655 1013,673 1047,673 1093,675 1137,674 1177,685 1210,689 1237,687 1273,702 1310,725 1343,743 1380,770 1413,787 1443,792 1470,800 1500,795 1550,791 1590,787 1634,791 1677,792 1704,801 1741,808 1785,822 1835,838 1859,844',
    's-black': '70,825 110,797 150,770 193,745 223,726 252,705 282,679 312,652 337,632 360,616 380,598 400,585 427,572 457,553 487,536 510,518 533,505 560,493 587,478 613,469 647,464 693,463 717,464 753,468 773,468 800,474 837,480 873,481 913,484 960,487 1000,491 1033,493 1060,497 1130,501 1170,508 1207,517 1259,542 1310,570 1350,590 1393,610 1427,630 1467,650 1500,665 1560,695 1627,720 1684,731 1734,742 1788,752 1859,769'
  };
  ['s-chikou', 's-kijun', 's-tenkan'].forEach(function (k) {
    el(plot, 'polyline', { points: lines[k], 'class': 'series ' + k });
  });
  ['s-thick', 's-black'].forEach(function (k) {
    el(plot, 'path', { d: smooth(lines[k]), 'class': 'series ' + k });
  });

  // --- ichimoku cloud, drawn over everything
  var cloudA = '70,537 103,537 108,583 117,610 127,619 140,620 148,627 152,644 167,644 175,623 187,623 205,614 210,593 214,578 228,578 237,587 244,599 325,599 335,568 370,566 377,513 385,512 393,503 403,497 410,470 413,420 422,408 440,408 487,406 513,402 533,397 543,377 553,376 560,370 570,357 573,350 613,348 618,330 625,290 727,289 735,313 742,317 743,353 748,365 757,367 767,383 773,395 793,396 800,412 807,413 813,423 822,433 833,443 842,477 870,477 875,492 947,493 953,498 967,537 977,547 982,565 988,565 997,587 1008,602 1035,602 1040,623 1048,640 1090,640 1097,687 1110,733 1140,736 1150,723 1160,710 1177,692 1232,696 1245,703 1327,702 1353,707 1373,727 1390,770 1398,772 1410,768 1413,785 1425,792 1470,800 1493,810 1510,807 1527,803 1542,808 1550,795 1590,787 1605,807 1612,790 1640,797 1671,795 1721,783 1734,787 1751,812 1768,815 1785,808 1808,820 1813,837 1848,837 1855,827 1868,817 1885,827 1905,844 1915,849 1931,849';
  var cloudB = '70,560 93,558 115,558 147,564 190,565 197,580 227,578 243,567 257,578 273,577 278,584 283,578 292,577 297,564 310,564 323,558 327,552 335,513 350,507 368,500 372,470 378,444 388,437 407,432 413,397 418,337 430,330 440,320 457,305 467,317 490,317 493,290 507,280 520,268 527,270 545,295 565,300 582,290 593,291 603,297 620,302 623,298 647,297 658,300 663,294 673,305 697,303 707,297 713,300 720,310 727,317 733,337 742,347 750,383 760,410 767,420 773,447 782,457 797,477 807,487 827,507 837,570 840,590 868,622 887,607 900,617 910,618 922,637 940,648 953,655 967,653 977,647 992,638 1003,633 1017,635 1030,652 1040,650 1053,640 1060,644 1092,655 1100,670 1107,692 1147,692 1155,707 1190,715 1225,713 1233,683 1250,637 1257,632 1272,640 1280,659 1295,663 1305,690 1313,694 1348,694 1353,703 1360,694 1373,694 1378,701 1412,701 1415,724 1490,724 1505,737 1513,768 1537,770 1547,783 1567,795 1590,785 1610,773 1634,770 1642,762 1657,763 1667,772 1677,783 1687,777 1711,773 1718,772 1731,783 1805,783 1810,798 1863,798 1873,812 1931,813';
  var fillPts = cloudA + ' ' + cloudB.split(' ').reverse().join(' ');
  el(plot, 'polygon', { points: fillPts, 'class': 'cloud-fill' });
  el(plot, 'polyline', { points: cloudA, 'class': 'cloud-line' });
  el(plot, 'polyline', { points: cloudB, 'class': 'cloud-line' });

  el(plot, 'line', { x1: 70, x2: 1931, y1: 912.5, y2: 912.5, 'class': 'price-line' });

  // --- navigator
  var navKeys = '71,136 107,142 154,132 187,135 223,135 281,145 288,140 328,142 377,136 404,142 446,135 484,133 513,138 553,136 594,139 625,136 700,138 733,137 749,144 789,147 838,143 887,146 914,142 937,145 977,140 1030,138 1079,129 1129,127 1164,132 1222,131 1253,132 1298,124 1312,122 1356,125 1400,123 1420,124 1448,129 1472,133 1496,132 1575,136 1591,132 1627,131 1639,134 1691,137 1759,135 1811,137 1858,136 1904,138'.split(' ').map(function (p) { return p.split(',').map(Number); });
  var navPts = [];
  for (i = 0; i < navKeys.length - 1; i++) {
    var a = navKeys[i], b = navKeys[i + 1];
    for (x = a[0]; x < b[0]; x += 5) {
      var t = (x - a[0]) / (b[0] - a[0]);
      navPts.push(x + ',' + (a[1] + (b[1] - a[1]) * t + (rnd() - 0.5) * 2.6).toFixed(1));
    }
  }
  el(nav, 'polyline', { points: navPts.join(' '), 'class': 'nav-line' });
  el(nav, 'rect', { x: 1223, y: 115, width: 708, height: 32.5, 'class': 'nav-sel' });
  el(nav, 'line', { x1: 1904, x2: 1904, y1: 118, y2: 147, 'class': 'nav-tick' });
  el(nav, 'polygon', { points: '1228,131 1234,127 1234,135', 'class': 'nav-mark' });
  el(nav, 'polygon', { points: '1927,131 1921,127 1921,135', 'class': 'nav-mark' });
})();
```
